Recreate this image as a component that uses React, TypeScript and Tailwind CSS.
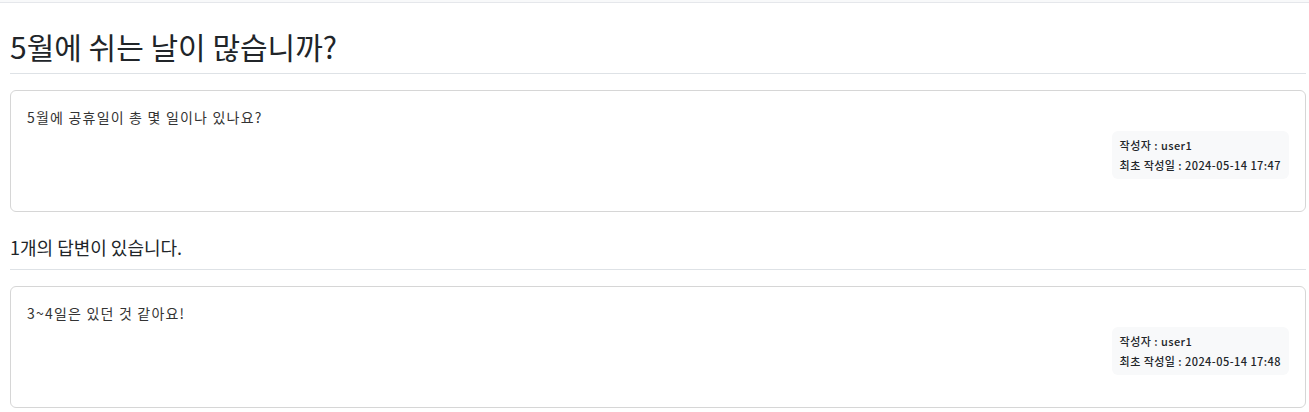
export default function App() {
  const posts = [
    { body: "5월에 공휴일이 총 몇 일이나 있나요?", author: "user1", date: "2024-05-14 17:47" },
  ];
  const answers = [
    { body: "3~4일은 있던 것 같아요!", author: "user1", date: "2024-05-14 17:48" },
  ];

  return (
    <div className="min-h-screen bg-white text-[#212529] font-['Noto_Sans_CJK_KR','Noto_Sans',sans-serif]">
      {/* top strip */}
      <div className="h-[3px] bg-[#f8f9fa] border-b border-[#e5e7eb]" />

      <div className="pl-[10px] pr-[3px]">
        {/* question */}
        <h2 className="mt-[25px] pb-[9px] border-b border-[#dee2e6] text-[30px] leading-[36px] font-normal">
          5월에 쉬는 날이 많습니까?
        </h2>

        {posts.map((p, i) => (
          <Card key={i} {...p} />
        ))}

        {/* answers */}
        <h5 className="mt-[22px] pb-[8px] border-b border-[#dee2e6] text-[18px] leading-[27px] font-normal">
          {answers.length}개의 답변이 있습니다.
        </h5>

        {answers.map((a, i) => (
          <Card key={i} {...a} />
        ))}
      </div>
    </div>
  );
}

function Card({ body, author, date }: { body: string; author: string; date: string }) {
  return (
    <div className="mt-4 flex flex-col rounded-md border border-[#d6d6d6] px-4 pt-4 pb-8">
      <p className="text-[14px] leading-[21px] tracking-[1.2px] text-[#333]">{body}</p>
      <div className="mt-[3px] self-end rounded-md bg-[#f8f9fa] px-2 py-1 text-[11px] leading-5 font-medium tracking-[0.45px] text-[#212529]">
        <div>작성자 : {author}</div>
        <div>최초 작성일 : {date}</div>
      </div>
    </div>
  );
}
